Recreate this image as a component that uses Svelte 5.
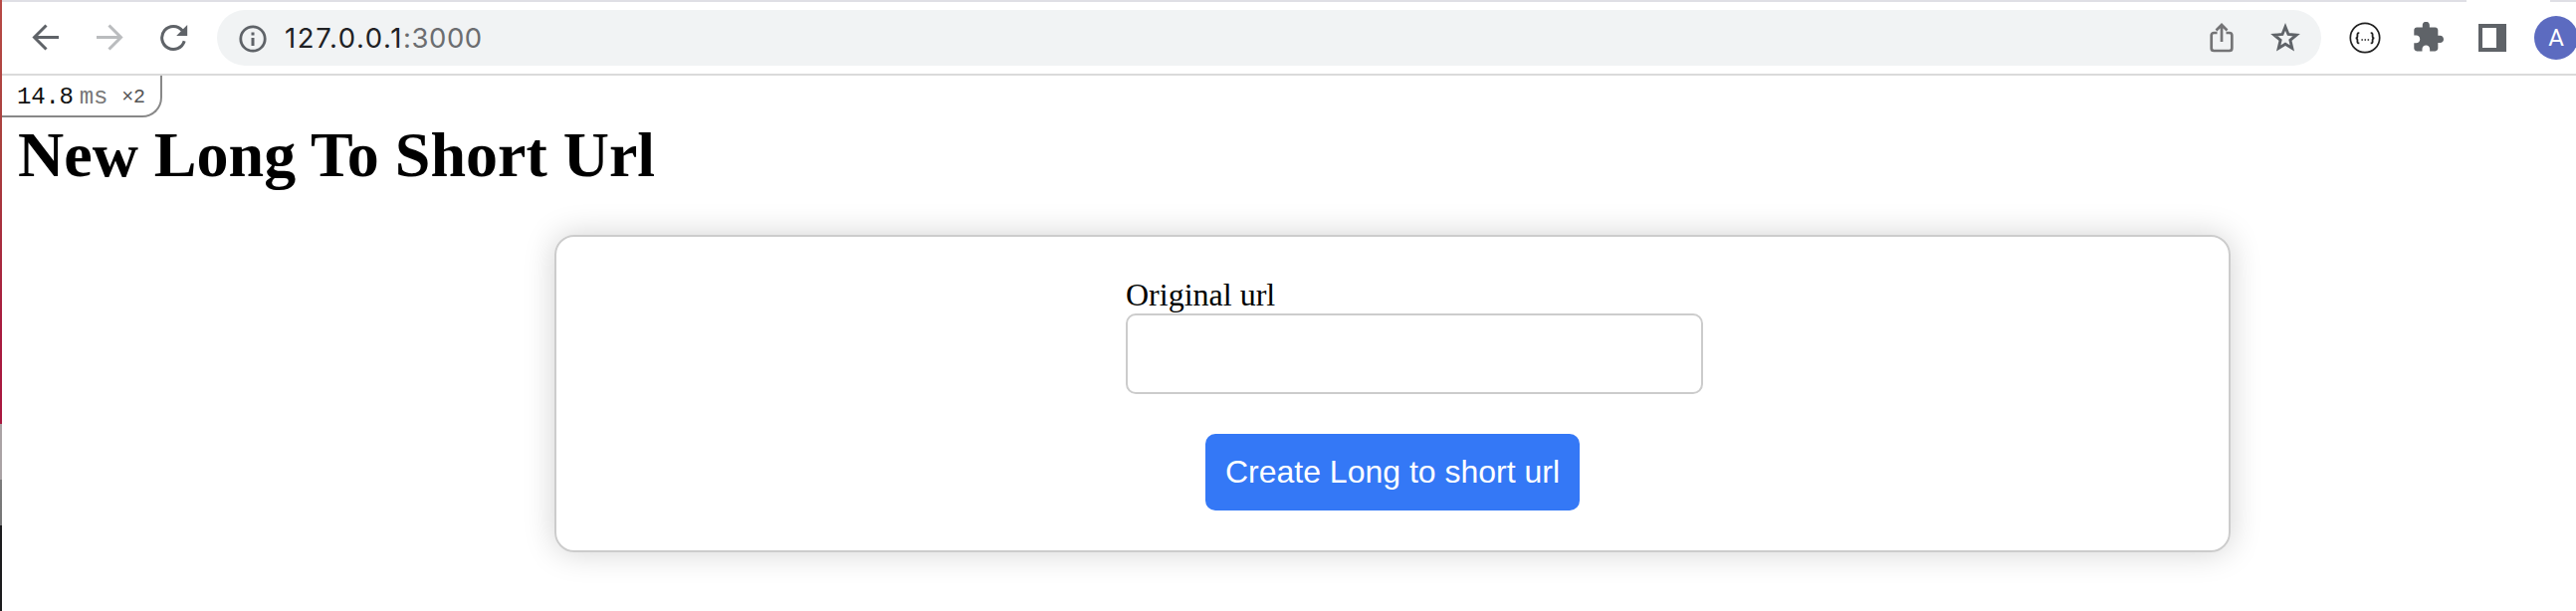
<script>
  let url = $state('');
</script>

<div class="window">
  <div class="edge"></div>
  <div class="browser">
    <div class="tabs"><div class="tab"></div></div>
    <header class="toolbar">
      <svg class="back" width="28" height="28" viewBox="0 0 28 28" fill="none" stroke="#5f6368" stroke-width="3">
        <path d="M27 13.500H3M14.500 1.500 2.500 13.500l12 12" />
      </svg>
      <svg class="forward" width="28" height="28" viewBox="0 0 28 28" fill="none" stroke="#babcbe" stroke-width="3">
        <path d="M1 13.500h24M13.500 1.500l12 12-12 12" />
      </svg>
      <svg class="reload" width="28" height="28" viewBox="0 0 28 28">
        <path d="M24.200 17.200A11.500 11.500 0 1 1 22.200 6.800" fill="none" stroke="#5f6368" stroke-width="3" />
        <path d="M27.200 1v11H16.200z" fill="#5f6368" />
      </svg>
      <div class="address">
        <svg class="info" width="28" height="28" viewBox="0 0 28 28" fill="none" stroke="#5f6368">
          <circle cx="14" cy="14" r="12.200" stroke-width="2.800" />
          <path d="M14 7.500v3M14 13v8" stroke-width="3" />
        </svg>
        <span class="url"><b>127.0.0.1</b>:3000</span>
        <svg class="share" width="24" height="30" viewBox="0 0 24 30" fill="none" stroke="#747476" stroke-width="2.700">
          <path d="M7.500 10H4.200a2.500 2.500 0 0 0-2.500 2.500v13A2.500 2.500 0 0 0 4.200 28h15.600a2.500 2.500 0 0 0 2.500-2.500v-13a2.500 2.500 0 0 0-2.500-2.500h-3.300" />
          <path d="M12 19V2M6.500 7.500 12 2l5.500 5.500" />
        </svg>
        <svg class="star" width="30" height="30" viewBox="0 0 30 30" fill="none" stroke="#5f6368" stroke-width="2.900">
          <path d="M15 4l3 7.500 8.200.7-6.300 5.200 1.900 8L15 21.200l-6.800 4.200 1.900-8-6.300-5.200 8.200-.7z" />
        </svg>
      </div>
      <svg class="json" width="32" height="32" viewBox="0 0 32 32" fill="none" stroke="#222">
        <circle cx="16" cy="16" r="14.700" stroke-width="1.700" />
        <g stroke-width="1.800">
          <path d="M10.300 11.200H9.600Q8.400 11.200 8.400 12.500V14.500Q8.400 16.300 6.600 16.300Q8.400 16.300 8.400 18.100V20.200Q8.400 21.400 9.600 21.400H10.300" />
          <path d="M21.700 11.200H22.400Q23.600 11.200 23.600 12.500V14.500Q23.600 16.300 25.400 16.300Q23.600 16.300 23.600 18.100V20.200Q23.600 21.400 22.400 21.400H21.700" />
          <path d="M12.400 18h1.500M15.500 18h1.500M18.600 18h1.500" stroke-width="1.500" />
        </g>
      </svg>
      <svg class="puzzle" width="30" height="30" viewBox="1.800 1.200 21.200 21.200" fill="#5f6368">
        <path d="M20.500 11H19V7c0-1.100-.9-2-2-2h-4V3.500C13 2.120 11.880 1 10.500 1S8 2.120 8 3.500V5H4c-1.100 0-1.990.9-1.990 2v3.800H3.500c1.490 0 2.700 1.210 2.700 2.700s-1.210 2.700-2.700 2.700H2V20c0 1.100.9 2 2 2h3.800v-1.500c0-1.490 1.210-2.700 2.700-2.700 1.490 0 2.700 1.210 2.700 2.700V22H17c1.100 0 2-.9 2-2v-4h1.500c1.380 0 2.500-1.120 2.500-2.500S21.880 11 20.500 11z" />
      </svg>
      <svg class="panel" width="28" height="28" viewBox="0 0 28 28">
        <path d="M0 0h28v28H0zM4 4v20h14V4z" fill="#5f6368" fill-rule="evenodd" />
      </svg>
      <div class="avatar">A</div>
    </header>
    <main>
      <div class="profiler"><span class="time">14.8</span><span class="unit">ms</span><span class="count"><small>×</small>2</span></div>
      <h1>New Long To Short Url</h1>
      <form>
        <div class="field">
          <label for="original">Original url</label>
          <input id="original" bind:value={url} />
        </div>
        <button type="button">Create Long to short url</button>
      </form>
    </main>
  </div>
</div>

<style>
  :global(body) { margin: 0; background: #fff; }
  .window { display: flex; width: 2588px; height: 614px; overflow: hidden; }
  .edge {
    flex: none; width: 2px;
    background: linear-gradient(#b84a46 0, #a8403e 150px, #a81c40 330px, #a91840 426px, #aaa3a5 426px, #aaa3a5 482px, #7b7b7b 482px, #777 528px, #1c1c1e 528px);
  }
  .browser { flex: 1; min-width: 0; }
  .tabs { height: 2px; background: #dfdfe5; display: flex; justify-content: flex-end; }
  .tab { width: 84px; margin-right: 26px; background: #fff; }
  .toolbar { height: 72px; display: flex; align-items: center; border-bottom: 2px solid #dadada; }
  svg { flex: none; display: block; }
  .back { margin-left: 30px; }
  .forward { margin-left: 36px; }
  .reload { margin-left: 37px; }
  .address { flex: none; width: 2114px; height: 56px; margin-left: 29px; box-sizing: border-box; border-radius: 28px; background: #f1f3f4; display: flex; align-items: center; padding-right: 20px; }
  .info { margin-left: 22px; margin-top: 1px; }
  .url { margin-left: 18px; font: 27.5px/36px Inter, sans-serif; color: #6b6d70; letter-spacing: .55px; flex: 1; }
  .url b { font-weight: 400; color: #202124; letter-spacing: 1.6px; }
  .share { margin-right: 37px; }
  .star { margin-right: 1px; }
  .json { margin-left: 28px; }
  .puzzle { margin-left: 33px; margin-top: -3px; }
  .panel { margin-left: 35px; }
  .avatar { flex: none; width: 44px; height: 44px; margin-left: 28px; border-radius: 50%; background: #5c6bc0; color: #fff; font: 24px/45px Roboto, sans-serif; text-align: center; }
  .profiler { width: 161px; height: 42px; box-sizing: border-box; border: solid #888; border-width: 0 2px 2px 0; border-bottom-right-radius: 20px; padding: 4px 0 0 15px; display: flex; align-items: center; font: 24px/36px "Liberation Mono", monospace; letter-spacing: -.2px; color: #111; }
  .unit { color: #777; margin-left: 6px; }
  .count { color: #555; margin-left: 14px; font-size: 20px; }
  .count small { font-size: 20px; }
  h1 { margin: 1px 0 0 16px; font: bold 64px/74px "Liberation Serif", serif; color: #000; }
  form { width: 1684px; height: 319px; box-sizing: border-box; margin: 43px 0 0 555px; padding-top: 40px; border: 2px solid #ccc; border-radius: 20px; box-shadow: 0 0 32px rgba(0, 0, 0, .18); display: flex; flex-direction: column; align-items: center; }
  .field { width: 580px; margin-left: 44px; display: flex; flex-direction: column; }
  label { font: 32px/37px "Liberation Serif", serif; color: #000; }
  input { width: 580px; height: 81px; box-sizing: border-box; border: 2px solid #ccc; border-radius: 10px; padding: 20px; font: 32px "Liberation Sans", sans-serif; outline: none; background: #fff; }
  button { width: 376px; height: 77px; margin-top: 40px; padding: 0; border: 0; border-radius: 10px; background: #3478f6; color: #fff; font: 32px/77px "Liberation Sans", sans-serif; white-space: nowrap; }
</style>
